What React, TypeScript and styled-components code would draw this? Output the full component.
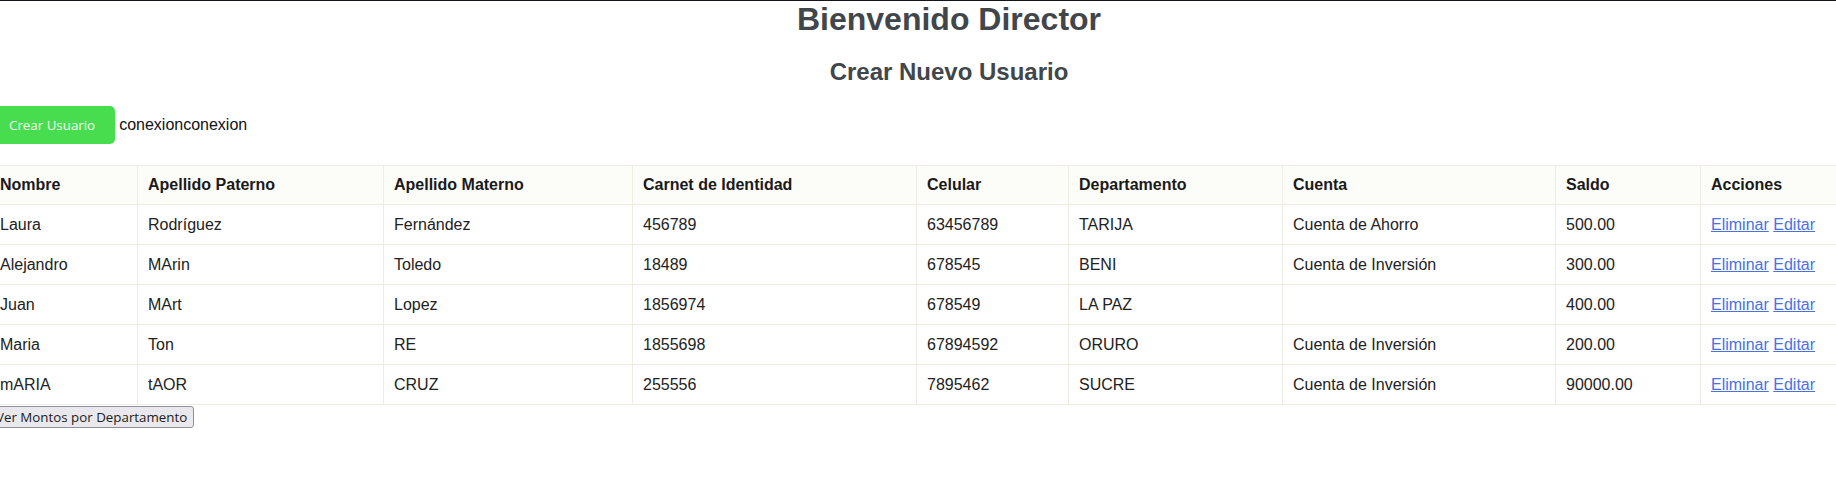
import React from "react";
import styled, { createGlobalStyle } from "styled-components";

const GlobalStyle = createGlobalStyle`
  html, body {
    margin: 0;
    padding: 0;
    overflow: hidden;
    background: #ffffff;
  }
  body {
    border-top: 1px solid #14141c;
    font-family: "Liberation Sans", Arial, sans-serif;
    color: #1b1b1b;
  }
`;

const Page = styled.div`
  width: 1920px;
  margin-left: -11px;
  display: flex;
  flex-direction: column;
  align-items: stretch;
`;

const Title = styled.h1`
  margin: 0;
  font-size: 32px;
  font-weight: 700;
  line-height: 37px;
  text-align: center;
  color: #41464b;
`;

const Subtitle = styled.h2`
  margin: 20px 0;
  font-size: 24px;
  font-weight: 700;
  line-height: 28px;
  text-align: center;
  color: #41464b;
`;

const Toolbar = styled.div`
  display: flex;
  align-items: center;
  gap: 4px;
  height: 38px;
`;

const PrimaryButton = styled.button`
  border: none;
  border-radius: 5px;
  background: #48dc4f;
  color: #f4fff4;
  font-family: "Open Sans", "Noto Sans", sans-serif;
  font-size: 13.33px;
  line-height: 18px;
  padding: 10px 20px;
  cursor: pointer;
`;

const StatusText = styled.span`
  font-size: 16px;
  color: #111111;
`;

const Table = styled.table`
  margin-top: 21px;
  width: 1920px;
  table-layout: fixed;
  border-collapse: collapse;
  font-size: 16px;
  line-height: 19px;
`;

const HeadCell = styled.th`
  text-align: left;
  font-weight: 700;
  padding: 10px;
  line-height: 18px;
  border: 1px solid #efece4;
  background: #fcfcf8;
  color: #1a1a1a;
`;

const Cell = styled.td`
  padding: 10px;
  border: 1px solid #efece4;
  background: #ffffff;
  color: #222222;
`;

const ActionLink = styled.a`
  color: #4b6fe4;
  text-decoration: underline;
  cursor: pointer;
`;

const SecondaryButton = styled.button`
  align-self: flex-start;
  margin-top: 1px;
  border: 1px solid #8f8f9d;
  border-radius: 3px;
  background: #e9e9ed;
  color: #1b1b1b;
  font-family: "Open Sans", "Noto Sans", sans-serif;
  font-size: 13.33px;
  line-height: 18px;
  padding: 1px 6px;
  cursor: pointer;
`;

const widths = [148, 246, 249, 284, 152, 214, 273, 145, 209];

const headers = [
  "Nombre",
  "Apellido Paterno",
  "Apellido Materno",
  "Carnet de Identidad",
  "Celular",
  "Departamento",
  "Cuenta",
  "Saldo",
  "Acciones",
];

const rows = [
  ["Laura", "Rodríguez", "Fernández", "456789", "63456789", "TARIJA", "Cuenta de Ahorro", "500.00"],
  ["Alejandro", "MArin", "Toledo", "18489", "678545", "BENI", "Cuenta de Inversión", "300.00"],
  ["Juan", "MArt", "Lopez", "1856974", "678549", "LA PAZ", "", "400.00"],
  ["Maria", "Ton", "RE", "1855698", "67894592", "ORURO", "Cuenta de Inversión", "200.00"],
  ["mARIA", "tAOR", "CRUZ", "255556", "7895462", "SUCRE", "Cuenta de Inversión", "90000.00"],
];

export default function App() {
  return (
    <>
      <GlobalStyle />
      <Page>
        <Title>Bienvenido Director</Title>
        <Subtitle>Crear Nuevo Usuario</Subtitle>
        <Toolbar>
          <PrimaryButton>Crear Usuario</PrimaryButton>
          <StatusText>conexionconexion</StatusText>
        </Toolbar>
        <Table>
          <colgroup>
            {widths.map((w, i) => (
              <col key={i} style={{ width: w }} />
            ))}
          </colgroup>
          <thead>
            <tr>
              {headers.map((h) => (
                <HeadCell key={h}>{h}</HeadCell>
              ))}
            </tr>
          </thead>
          <tbody>
            {rows.map((r, i) => (
              <tr key={i}>
                {r.map((c, j) => (
                  <Cell key={j}>{c}</Cell>
                ))}
                <Cell>
                  <ActionLink>Eliminar</ActionLink> <ActionLink>Editar</ActionLink>
                </Cell>
              </tr>
            ))}
          </tbody>
        </Table>
        <SecondaryButton>Ver Montos por Departamento</SecondaryButton>
      </Page>
    </>
  );
}
